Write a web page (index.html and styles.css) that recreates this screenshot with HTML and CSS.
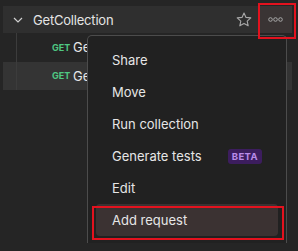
FILE: index.html
```html
<!DOCTYPE html>
<html lang="en">
<head>
    <meta charset="UTF-8">
    <title>Collection menu</title>
    <link rel="stylesheet" href="styles.css">
</head>
<body>
    <div class="sidebar">
        <div class="collection-row">
            <span class="chevron">
                <svg width="10" height="6" viewBox="0 0 10 6"><path d="M1 1l4 4 4-4" fill="none" stroke="#d0d0d0" stroke-width="1.2"/></svg>
            </span>
            <span class="collection-name">GetCollection</span>
            <span class="star">
                <svg width="16" height="15" viewBox="0 0 16 15"><path d="M8 1l2 4.4 4.8.5-3.6 3.2 1 4.7L8 11.4l-4.2 2.4 1-4.7-3.6-3.2 4.8-.5z" fill="none" stroke="#a8a8a8" stroke-width="1.1" stroke-linejoin="round"/></svg>
            </span>
            <span class="more-btn">
                <svg width="15" height="5" viewBox="0 0 15 5"><circle cx="2.5" cy="2.5" r="1.8" fill="none" stroke="#a8a8a8"/><circle cx="7.5" cy="2.5" r="1.8" fill="none" stroke="#a8a8a8"/><circle cx="12.5" cy="2.5" r="1.8" fill="none" stroke="#a8a8a8"/></svg>
            </span>
        </div>
        <div class="request-row">
            <span class="guide"></span>
            <span class="method">GET</span>
            <span class="request-name">Ge</span>
        </div>
        <div class="request-row selected">
            <span class="guide"></span>
            <span class="method">GET</span>
            <span class="request-name">Ge</span>
        </div>
    </div>

    <!-- menu aberto sobre a lista -->
    <div class="context-menu">
        <div class="menu-item">Share</div>
        <div class="menu-item">Move</div>
        <div class="menu-item">Run collection</div>
        <div class="menu-item">Generate tests <span class="badge">BETA</span></div>
        <div class="menu-item">Edit</div>
        <div class="menu-item active">Add request</div>
    </div>

    <div class="mark mark-more"></div>
    <div class="mark mark-add"></div>
</body>
</html>
```

FILE: styles.css
```css
* {
    margin: 0;
    padding: 0;
    box-sizing: border-box;
}

body {
    font-family: 'Inter', 'Liberation Sans', sans-serif;
    background-color: #252525;
    color: #e6e6e6;
    width: 298px;
    height: 251px;
    overflow: hidden;
    position: relative;
}

.sidebar {
    padding: 6px 6px 0 3px;
}

.collection-row {
    display: flex;
    align-items: center;
    height: 27px;
    background-color: #2f2f2f;
    font-size: 13px;
}

.chevron {
    width: 30px;
    display: flex;
    justify-content: center;
    padding-top: 1px;
}

.collection-name {
    flex: 1;
    color: #e4e4e4;
    letter-spacing: -0.2px;
}

.star {
    display: flex;
    margin-right: 7px;
}

.more-btn {
    width: 33px;
    height: 27px;
    display: flex;
    align-items: center;
    justify-content: center;
    background-color: #3a3434;
}

.request-row {
    display: flex;
    align-items: center;
    height: 28.5px;
    font-size: 13px;
}

.request-row.selected {
    background-color: #343434;
}

.guide {
    align-self: stretch;
    width: 36px;
    margin-left: 13px;
    border-left: 1px solid #3c3c3c;
}

.method {
    color: #4fc882;
    font-size: 9px;
    font-weight: 700;
    width: 21px;
}

.request-name {
    color: #e6e6e6;
}

.context-menu {
    position: absolute;
    left: 87px;
    top: 35px;
    width: 200px;
    height: 208px;
    background-color: #212121;
    border: 1px solid #4c4c4c;
    border-bottom: none;
    border-radius: 5px 5px 0 0;
    padding: 8px 8px 0;
    font-size: 13px;
}

.menu-item {
    height: 32px;
    display: flex;
    align-items: center;
    justify-content: space-between;
    padding: 0 16px;
    border-radius: 4px;
    color: #e6e6e6;
}

.menu-item.active {
    background-color: #3b3232;
}

.badge {
    background-color: #3c1d5e;
    color: #b98be8;
    font-size: 9.5px;
    font-weight: 700;
    letter-spacing: 0.4px;
    padding: 2px 4px;
    border-radius: 3px;
    margin-top: 1px;
}

/* marcas vermelhas da captura */
.mark {
    position: absolute;
    border: 2px solid #e3121e;
}

.mark-more {
    left: 258px;
    top: 3px;
    width: 38px;
    height: 36px;
}

.mark-add {
    left: 92px;
    top: 206px;
    width: 192px;
    height: 34px;
}
```
